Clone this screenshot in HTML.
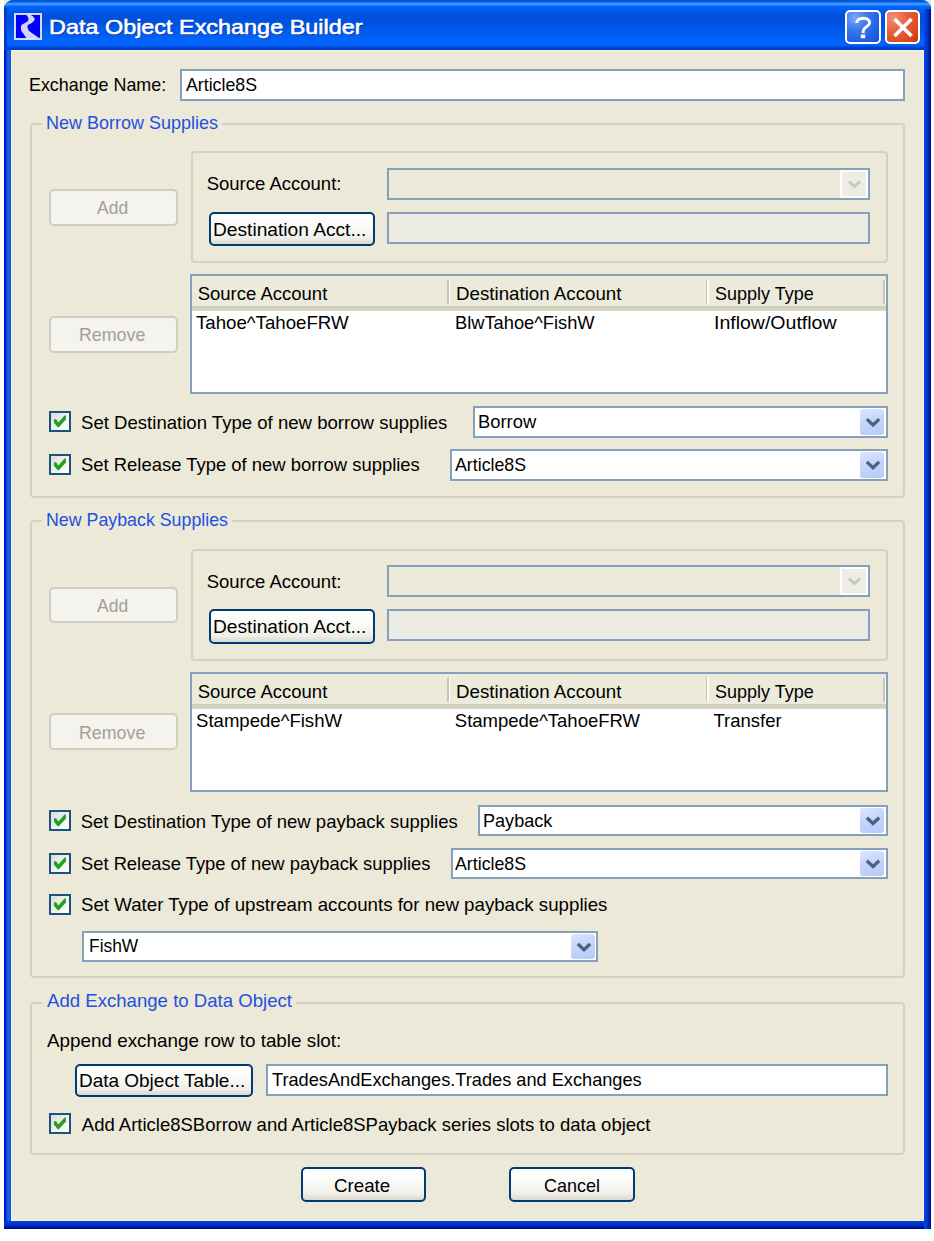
<!DOCTYPE html>
<html><head><meta charset="utf-8"><title>Data Object Exchange Builder</title>
<style>
html,body{margin:0;padding:0;}
body{width:934px;height:1241px;position:relative;overflow:hidden;background:#FFFFFF;font-family:"Liberation Sans", sans-serif;}
</style></head><body>
<div style="position:absolute;left:4px;top:0px;width:927px;height:12px;box-sizing:border-box;background:#ECE9D8;"></div>
<div style="position:absolute;left:4px;top:0;width:927px;height:1229px;border-radius:9px 9px 0 0;overflow:hidden;background:linear-gradient(90deg,#0000C8 0px,#0A2CD8 2px,#1468F0 4px,#0A55D8 6.5px,#0050E0 7px,#0048F0 920px,#0030B0 924px,#000090 927px);"></div>
<div style="position:absolute;left:4px;top:1221px;width:927px;height:8px;box-sizing:border-box;background:linear-gradient(#0040F0,#0030C0 50%,#000080);"></div>
<div style="position:absolute;left:4px;top:1221px;width:8px;height:8px;box-sizing:border-box;background:linear-gradient(#0040F0,#0030C0 50%,#000080);"></div>
<div style="position:absolute;left:4px;top:0;width:927px;height:50px;border-radius:9px 9px 0 0;background:linear-gradient(#0058DD 0px,#0058DD 2px,#3C95FF 3px,#3C95FF 5px,#0066FF 6px,#0053DD 14px,#0050DD 20px,#0058EA 30px,#0062F8 38px,#0064FF 45px,#003DC8 48px,#0040C8 50px);"></div>
<div style="position:absolute;left:924px;top:9px;width:7px;height:1220px;box-sizing:border-box;background:linear-gradient(90deg,#0048F0,#0030B8 60%,#000090);"></div>
<div style="position:absolute;left:4px;top:8px;width:2.5px;height:42px;box-sizing:border-box;background:linear-gradient(90deg,#0030C8,#0048D8);"></div>
<div style="position:absolute;left:11px;top:49.5px;width:913px;height:1171.5px;box-sizing:border-box;background:#ECE9D8;border-left:1px solid #FAF3D9;border-right:1px solid #FAF3D9;border-bottom:1px solid #FAF3D9;"></div>
<div style="position:absolute;left:11px;top:49.5px;width:913px;height:1.5px;box-sizing:border-box;background:#F5F0D8;"></div>
<svg style="position:absolute;left:14px;top:13px" width="28" height="27" viewBox="0 0 28 27"><rect x="0" y="0" width="28" height="27" fill="#D8D8F8"/><rect x="2" y="2" width="24" height="23" fill="#0000FF"/><path d="M12.3 2 L16.8 2 Q20.8 4.2 20.8 6.6 Q19.5 9 17.3 10.2 L13.9 12.1 Q13.2 14 13.5 14.8 L15 17.9 L19.3 21 L23.5 24.1 L25.5 25 L12.3 25 L9.6 21 L7.3 17.9 L6.9 14.8 L7.3 12.1 L10.4 10.2 Q14.6 8 14.6 6.4 Q14.2 3.5 12.3 2 Z" fill="#D4D4F8"/></svg>
<div style="position:absolute;left:845px;top:10px;width:36px;height:34px;box-sizing:border-box;border:2px solid #FFFFFF;border-radius:5px;background:radial-gradient(circle at 25% 20%,#7FA8F8 0%,#3D78EE 35%,#2260E4 70%,#1A50D0 100%);"></div>
<svg style="position:absolute;left:845px;top:10px" width="36" height="34" viewBox="0 0 36 34"><path d="M11.6 13 C11.6 6.8 24.6 6.6 24.6 12.6 C24.6 16.6 18.2 17.2 18.2 21.2 L18.2 23.2" fill="none" stroke="#FFFFFF" stroke-width="2.9"/><rect x="15.8" y="24.6" width="4.4" height="3.6" fill="#FFFFFF"/></svg>
<div style="position:absolute;left:885px;top:10px;width:35px;height:34px;box-sizing:border-box;border:2px solid #FFFFFF;border-radius:5px;background:radial-gradient(circle at 20% 20%,#F0907A 0%,#E5603E 40%,#DD4A1C 75%,#C03A10 100%);"></div>
<svg style="position:absolute;left:885px;top:10px" width="35" height="34" viewBox="0 0 35 34"><path d="M9.5 9 L26.5 26 M26.5 9 L9.5 26" stroke="#FFFFFF" stroke-width="3.6"/></svg>
<div style="position:absolute;left:180px;top:68.5px;width:725px;height:32.0px;box-sizing:border-box;border:2px solid #84A0BC;background:#fff;"></div>
<div style="position:absolute;left:30px;top:122.5px;width:875px;height:375.0px;box-sizing:border-box;border:2px solid #D3D2C2;border-radius:4px;"></div>
<div style="position:absolute;left:42px;top:112px;width:180.2px;height:20px;box-sizing:border-box;background:#ECE9D8;"></div>
<div style="position:absolute;left:191px;top:151px;width:697px;height:112px;box-sizing:border-box;border:2px solid #D3D2C2;border-radius:4px;"></div>
<div style="position:absolute;left:49px;top:189px;width:128.5px;height:36.5px;box-sizing:border-box;border:2px solid #D0CEC2;border-radius:5px;background:#F4F3EE;"></div>
<div style="position:absolute;left:386.5px;top:167.5px;width:483.5px;height:32.0px;box-sizing:border-box;border:2px solid #84A0BC;background:#ECE9D8;"></div>
<div style="position:absolute;left:840px;top:169.5px;width:28px;height:28.0px;box-sizing:border-box;border:2px solid #FFFFFF;background:#EEEDE5;"></div>
<svg style="position:absolute;left:840px;top:169.5px" width="28" height="28.0" viewBox="0 0 28 28.0"><path d="M9.0 11.5 L14.5 16.5 L20.0 11.5" fill="none" stroke="#C9C7BA" stroke-width="3.0"/></svg>
<div style="position:absolute;left:209px;top:211.5px;width:165.5px;height:34.5px;box-sizing:border-box;border:2px solid #003C74;border-radius:5px;background:linear-gradient(#FFFFFF 0%,#FAFAF7 40%,#F0EFEA 80%,#DCD7CC 100%);"></div>
<div style="position:absolute;left:386.5px;top:211.5px;width:483.5px;height:32.0px;box-sizing:border-box;border:2px solid #84A0BC;background:#EBEAE3;"></div>
<div style="position:absolute;left:49px;top:315.5px;width:128.5px;height:37.0px;box-sizing:border-box;border:2px solid #D0CEC2;border-radius:5px;background:#F4F3EE;"></div>
<div style="position:absolute;left:190px;top:273.8px;width:698px;height:120.5px;box-sizing:border-box;border:2px solid #84A0BC;background:#fff;"></div>
<div style="position:absolute;left:192px;top:275.8px;width:694px;height:30.0px;box-sizing:border-box;background:#EBEADB;"></div>
<div style="position:absolute;left:192px;top:305.8px;width:694px;height:5.0px;box-sizing:border-box;background:linear-gradient(#CFCBB9,#DCD8C6);"></div>
<div style="position:absolute;left:447px;top:279.8px;width:1.5px;height:24.0px;box-sizing:border-box;background:#C7C5B2;"></div>
<div style="position:absolute;left:448.5px;top:279.8px;width:1.5px;height:24.0px;box-sizing:border-box;background:#FFFFFF;"></div>
<div style="position:absolute;left:705.5px;top:279.8px;width:1.5px;height:24.0px;box-sizing:border-box;background:#C7C5B2;"></div>
<div style="position:absolute;left:707.0px;top:279.8px;width:1.5px;height:24.0px;box-sizing:border-box;background:#FFFFFF;"></div>
<div style="position:absolute;left:883px;top:279.8px;width:1.5px;height:24.0px;box-sizing:border-box;background:#C7C5B2;"></div>
<div style="position:absolute;left:884.5px;top:279.8px;width:1.5px;height:24.0px;box-sizing:border-box;background:#FFFFFF;"></div>
<div style="position:absolute;left:49px;top:411px;width:22px;height:21px;box-sizing:border-box;border:2px solid #1C5180;background:linear-gradient(135deg,#DCDCD7 0%,#F0F0EC 50%,#FFFFFF 100%);"></div>
<svg style="position:absolute;left:49px;top:411px" width="22" height="21" viewBox="0 0 22 21"><path d="M5 8.2 L7.2 8.2 L9.3 11.6 L15.6 4.4 L16.9 4.4 L16.9 8.6 L9.8 16.2 L8.8 16.2 L5 11.8 Z" fill="#21A121"/></svg>
<div style="position:absolute;left:473px;top:406.3px;width:415px;height:32.0px;box-sizing:border-box;border:2px solid #84A0BC;background:#fff;"></div>
<div style="position:absolute;left:860px;top:409.3px;width:24px;height:26.0px;box-sizing:border-box;border-radius:3px;background:linear-gradient(160deg,#DCE6FD 0%,#C6D5FB 45%,#B4CBF8 100%);"></div>
<svg style="position:absolute;left:860px;top:409.3px" width="24" height="26.0" viewBox="0 0 24 26.0"><path d="M6.8 10.1 L13.0 15.9 L19.2 10.1" fill="none" stroke="#4D6185" stroke-width="3.3"/></svg>
<div style="position:absolute;left:49px;top:453.5px;width:22px;height:21.0px;box-sizing:border-box;border:2px solid #1C5180;background:linear-gradient(135deg,#DCDCD7 0%,#F0F0EC 50%,#FFFFFF 100%);"></div>
<svg style="position:absolute;left:49px;top:453.5px" width="22" height="21" viewBox="0 0 22 21"><path d="M5 8.2 L7.2 8.2 L9.3 11.6 L15.6 4.4 L16.9 4.4 L16.9 8.6 L9.8 16.2 L8.8 16.2 L5 11.8 Z" fill="#21A121"/></svg>
<div style="position:absolute;left:450.3px;top:449.2px;width:437.7px;height:31.6px;box-sizing:border-box;border:2px solid #84A0BC;background:#fff;"></div>
<div style="position:absolute;left:860px;top:452.2px;width:24px;height:25.6px;box-sizing:border-box;border-radius:3px;background:linear-gradient(160deg,#DCE6FD 0%,#C6D5FB 45%,#B4CBF8 100%);"></div>
<svg style="position:absolute;left:860px;top:452.2px" width="24" height="25.600000000000023" viewBox="0 0 24 25.600000000000023"><path d="M6.8 9.900000000000011 L13.0 15.700000000000012 L19.2 9.900000000000011" fill="none" stroke="#4D6185" stroke-width="3.3"/></svg>
<div style="position:absolute;left:30px;top:520.2px;width:875px;height:457.8px;box-sizing:border-box;border:2px solid #D3D2C2;border-radius:4px;"></div>
<div style="position:absolute;left:42px;top:509.7px;width:190.4px;height:20.0px;box-sizing:border-box;background:#ECE9D8;"></div>
<div style="position:absolute;left:191px;top:548.7px;width:697px;height:112.0px;box-sizing:border-box;border:2px solid #D3D2C2;border-radius:4px;"></div>
<div style="position:absolute;left:49px;top:586.7px;width:128.5px;height:36.5px;box-sizing:border-box;border:2px solid #D0CEC2;border-radius:5px;background:#F4F3EE;"></div>
<div style="position:absolute;left:386.5px;top:565.2px;width:483.5px;height:32.0px;box-sizing:border-box;border:2px solid #84A0BC;background:#ECE9D8;"></div>
<div style="position:absolute;left:840px;top:567.2px;width:28px;height:28.0px;box-sizing:border-box;border:2px solid #FFFFFF;background:#EEEDE5;"></div>
<svg style="position:absolute;left:840px;top:567.2px" width="28" height="28.0" viewBox="0 0 28 28.0"><path d="M9.0 11.5 L14.5 16.5 L20.0 11.5" fill="none" stroke="#C9C7BA" stroke-width="3.0"/></svg>
<div style="position:absolute;left:209px;top:609.2px;width:165.5px;height:34.5px;box-sizing:border-box;border:2px solid #003C74;border-radius:5px;background:linear-gradient(#FFFFFF 0%,#FAFAF7 40%,#F0EFEA 80%,#DCD7CC 100%);"></div>
<div style="position:absolute;left:386.5px;top:609.2px;width:483.5px;height:32.0px;box-sizing:border-box;border:2px solid #84A0BC;background:#EBEAE3;"></div>
<div style="position:absolute;left:49px;top:713.2px;width:128.5px;height:37.0px;box-sizing:border-box;border:2px solid #D0CEC2;border-radius:5px;background:#F4F3EE;"></div>
<div style="position:absolute;left:190px;top:671.5px;width:698px;height:120.5px;box-sizing:border-box;border:2px solid #84A0BC;background:#fff;"></div>
<div style="position:absolute;left:192px;top:673.5px;width:694px;height:30.0px;box-sizing:border-box;background:#EBEADB;"></div>
<div style="position:absolute;left:192px;top:703.5px;width:694px;height:5.0px;box-sizing:border-box;background:linear-gradient(#CFCBB9,#DCD8C6);"></div>
<div style="position:absolute;left:447px;top:677.5px;width:1.5px;height:24.0px;box-sizing:border-box;background:#C7C5B2;"></div>
<div style="position:absolute;left:448.5px;top:677.5px;width:1.5px;height:24.0px;box-sizing:border-box;background:#FFFFFF;"></div>
<div style="position:absolute;left:705.5px;top:677.5px;width:1.5px;height:24.0px;box-sizing:border-box;background:#C7C5B2;"></div>
<div style="position:absolute;left:707.0px;top:677.5px;width:1.5px;height:24.0px;box-sizing:border-box;background:#FFFFFF;"></div>
<div style="position:absolute;left:883px;top:677.5px;width:1.5px;height:24.0px;box-sizing:border-box;background:#C7C5B2;"></div>
<div style="position:absolute;left:884.5px;top:677.5px;width:1.5px;height:24.0px;box-sizing:border-box;background:#FFFFFF;"></div>
<div style="position:absolute;left:49px;top:810px;width:22px;height:21px;box-sizing:border-box;border:2px solid #1C5180;background:linear-gradient(135deg,#DCDCD7 0%,#F0F0EC 50%,#FFFFFF 100%);"></div>
<svg style="position:absolute;left:49px;top:810px" width="22" height="21" viewBox="0 0 22 21"><path d="M5 8.2 L7.2 8.2 L9.3 11.6 L15.6 4.4 L16.9 4.4 L16.9 8.6 L9.8 16.2 L8.8 16.2 L5 11.8 Z" fill="#21A121"/></svg>
<div style="position:absolute;left:478px;top:805.2px;width:410px;height:31.3px;box-sizing:border-box;border:2px solid #84A0BC;background:#fff;"></div>
<div style="position:absolute;left:860px;top:808.2px;width:24px;height:25.3px;box-sizing:border-box;border-radius:3px;background:linear-gradient(160deg,#DCE6FD 0%,#C6D5FB 45%,#B4CBF8 100%);"></div>
<svg style="position:absolute;left:860px;top:808.2px" width="24" height="25.299999999999955" viewBox="0 0 24 25.299999999999955"><path d="M6.8 9.749999999999977 L13.0 15.549999999999978 L19.2 9.749999999999977" fill="none" stroke="#4D6185" stroke-width="3.3"/></svg>
<div style="position:absolute;left:49px;top:852.5px;width:22px;height:21.0px;box-sizing:border-box;border:2px solid #1C5180;background:linear-gradient(135deg,#DCDCD7 0%,#F0F0EC 50%,#FFFFFF 100%);"></div>
<svg style="position:absolute;left:49px;top:852.5px" width="22" height="21" viewBox="0 0 22 21"><path d="M5 8.2 L7.2 8.2 L9.3 11.6 L15.6 4.4 L16.9 4.4 L16.9 8.6 L9.8 16.2 L8.8 16.2 L5 11.8 Z" fill="#21A121"/></svg>
<div style="position:absolute;left:450.6px;top:848px;width:437.4px;height:31.3px;box-sizing:border-box;border:2px solid #84A0BC;background:#fff;"></div>
<div style="position:absolute;left:860px;top:851px;width:24px;height:25.3px;box-sizing:border-box;border-radius:3px;background:linear-gradient(160deg,#DCE6FD 0%,#C6D5FB 45%,#B4CBF8 100%);"></div>
<svg style="position:absolute;left:860px;top:851px" width="24" height="25.299999999999955" viewBox="0 0 24 25.299999999999955"><path d="M6.8 9.749999999999977 L13.0 15.549999999999978 L19.2 9.749999999999977" fill="none" stroke="#4D6185" stroke-width="3.3"/></svg>
<div style="position:absolute;left:49px;top:894px;width:22px;height:21px;box-sizing:border-box;border:2px solid #1C5180;background:linear-gradient(135deg,#DCDCD7 0%,#F0F0EC 50%,#FFFFFF 100%);"></div>
<svg style="position:absolute;left:49px;top:894px" width="22" height="21" viewBox="0 0 22 21"><path d="M5 8.2 L7.2 8.2 L9.3 11.6 L15.6 4.4 L16.9 4.4 L16.9 8.6 L9.8 16.2 L8.8 16.2 L5 11.8 Z" fill="#21A121"/></svg>
<div style="position:absolute;left:81.8px;top:930.6px;width:516.7px;height:31.7px;box-sizing:border-box;border:2px solid #84A0BC;background:#fff;"></div>
<div style="position:absolute;left:570.5px;top:933.6px;width:24.0px;height:25.7px;box-sizing:border-box;border-radius:3px;background:linear-gradient(160deg,#DCE6FD 0%,#C6D5FB 45%,#B4CBF8 100%);"></div>
<svg style="position:absolute;left:570.5px;top:933.6px" width="24.0" height="25.699999999999932" viewBox="0 0 24.0 25.699999999999932"><path d="M6.8 9.949999999999966 L13.0 15.749999999999966 L19.2 9.949999999999966" fill="none" stroke="#4D6185" stroke-width="3.3"/></svg>
<div style="position:absolute;left:30px;top:1002px;width:875px;height:153px;box-sizing:border-box;border:2px solid #D3D2C2;border-radius:4px;"></div>
<div style="position:absolute;left:42px;top:990px;width:254.3px;height:20px;box-sizing:border-box;background:#ECE9D8;"></div>
<div style="position:absolute;left:75px;top:1063.7px;width:178.2px;height:33.5px;box-sizing:border-box;border:2px solid #003C74;border-radius:5px;background:linear-gradient(#FFFFFF 0%,#FAFAF7 40%,#F0EFEA 80%,#DCD7CC 100%);"></div>
<div style="position:absolute;left:266px;top:1063.7px;width:622px;height:32.3px;box-sizing:border-box;border:2px solid #84A0BC;background:#fff;"></div>
<div style="position:absolute;left:49px;top:1113px;width:22px;height:21px;box-sizing:border-box;border:2px solid #1C5180;background:linear-gradient(135deg,#DCDCD7 0%,#F0F0EC 50%,#FFFFFF 100%);"></div>
<svg style="position:absolute;left:49px;top:1113px" width="22" height="21" viewBox="0 0 22 21"><path d="M5 8.2 L7.2 8.2 L9.3 11.6 L15.6 4.4 L16.9 4.4 L16.9 8.6 L9.8 16.2 L8.8 16.2 L5 11.8 Z" fill="#21A121"/></svg>
<div style="position:absolute;left:300.5px;top:1167px;width:125.5px;height:35px;box-sizing:border-box;border:2px solid #003C74;border-radius:5px;background:linear-gradient(#FFFFFF 0%,#FAFAF7 40%,#F0EFEA 80%,#DCD7CC 100%);"></div>
<div style="position:absolute;left:509px;top:1167px;width:125.5px;height:35px;box-sizing:border-box;border:2px solid #003C74;border-radius:5px;background:linear-gradient(#FFFFFF 0%,#FAFAF7 40%,#F0EFEA 80%,#DCD7CC 100%);"></div>
<div style="position:absolute;left:49.00px;top:17.39px;font-size:20.8px;line-height:20.8px;font-weight:normal;color:#FFFFFF;white-space:pre;transform:scaleX(1.1252);transform-origin:0 0;-webkit-text-stroke:0.6px #FFFFFF;text-shadow:1px 1px 0 #0A2A9A;">Data Object Exchange Builder</div>
<div style="position:absolute;left:29.20px;top:75.64px;font-size:18.5px;line-height:18.5px;font-weight:normal;color:#000;white-space:pre;transform:scaleX(0.9667);transform-origin:0 0;">Exchange Name:</div>
<div style="position:absolute;left:186.30px;top:75.84px;font-size:18.5px;line-height:18.5px;font-weight:normal;color:#000;white-space:pre;transform:scaleX(0.9591);transform-origin:0 0;">Article8S</div>
<div style="position:absolute;left:46.20px;top:113.94px;font-size:18.5px;line-height:18.5px;font-weight:normal;color:#1F50DF;white-space:pre;transform:scaleX(0.9725);transform-origin:0 0;">New Borrow Supplies</div>
<div style="position:absolute;left:96.65px;top:199.34px;font-size:18.5px;line-height:18.5px;font-weight:normal;color:#A39F94;white-space:pre;transform:scaleX(0.9447);transform-origin:0 0;">Add</div>
<div style="position:absolute;left:206.70px;top:175.04px;font-size:18.5px;line-height:18.5px;font-weight:normal;color:#000;white-space:pre;">Source Account:</div>
<div style="position:absolute;left:213.40px;top:220.64px;font-size:18.5px;line-height:18.5px;font-weight:normal;color:#000;white-space:pre;transform:scaleX(1.0359);transform-origin:0 0;">Destination Acct...</div>
<div style="position:absolute;left:79.05px;top:326.14px;font-size:18.5px;line-height:18.5px;font-weight:normal;color:#A39F94;white-space:pre;transform:scaleX(0.9624);transform-origin:0 0;">Remove</div>
<div style="position:absolute;left:197.70px;top:284.84px;font-size:18.5px;line-height:18.5px;font-weight:normal;color:#000;white-space:pre;">Source Account</div>
<div style="position:absolute;left:455.90px;top:284.84px;font-size:18.5px;line-height:18.5px;font-weight:normal;color:#000;white-space:pre;transform:scaleX(1.0120);transform-origin:0 0;">Destination Account</div>
<div style="position:absolute;left:714.90px;top:284.84px;font-size:18.5px;line-height:18.5px;font-weight:normal;color:#000;white-space:pre;transform:scaleX(0.9745);transform-origin:0 0;">Supply Type</div>
<div style="position:absolute;left:196.00px;top:314.44px;font-size:18.5px;line-height:18.5px;font-weight:normal;color:#000;white-space:pre;transform:scaleX(1.0087);transform-origin:0 0;">Tahoe^TahoeFRW</div>
<div style="position:absolute;left:454.80px;top:314.44px;font-size:18.5px;line-height:18.5px;font-weight:normal;color:#000;white-space:pre;transform:scaleX(0.9879);transform-origin:0 0;">BlwTahoe^FishW</div>
<div style="position:absolute;left:713.50px;top:314.44px;font-size:18.5px;line-height:18.5px;font-weight:normal;color:#000;white-space:pre;transform:scaleX(1.0543);transform-origin:0 0;">Inflow/Outflow</div>
<div style="position:absolute;left:80.70px;top:413.54px;font-size:18.5px;line-height:18.5px;font-weight:normal;color:#000;white-space:pre;transform:scaleX(1.0043);transform-origin:0 0;">Set Destination Type of new borrow supplies</div>
<div style="position:absolute;left:477.50px;top:412.94px;font-size:18.5px;line-height:18.5px;font-weight:normal;color:#000;white-space:pre;transform:scaleX(0.9930);transform-origin:0 0;">Borrow</div>
<div style="position:absolute;left:80.70px;top:456.34px;font-size:18.5px;line-height:18.5px;font-weight:normal;color:#000;white-space:pre;transform:scaleX(0.9963);transform-origin:0 0;">Set Release Type of new borrow supplies</div>
<div style="position:absolute;left:454.80px;top:455.84px;font-size:18.5px;line-height:18.5px;font-weight:normal;color:#000;white-space:pre;transform:scaleX(0.9604);transform-origin:0 0;">Article8S</div>
<div style="position:absolute;left:46.40px;top:510.84px;font-size:18.5px;line-height:18.5px;font-weight:normal;color:#1F50DF;white-space:pre;transform:scaleX(0.9618);transform-origin:0 0;">New Payback Supplies</div>
<div style="position:absolute;left:96.65px;top:597.04px;font-size:18.5px;line-height:18.5px;font-weight:normal;color:#A39F94;white-space:pre;transform:scaleX(0.9447);transform-origin:0 0;">Add</div>
<div style="position:absolute;left:206.70px;top:572.74px;font-size:18.5px;line-height:18.5px;font-weight:normal;color:#000;white-space:pre;">Source Account:</div>
<div style="position:absolute;left:213.40px;top:618.34px;font-size:18.5px;line-height:18.5px;font-weight:normal;color:#000;white-space:pre;transform:scaleX(1.0359);transform-origin:0 0;">Destination Acct...</div>
<div style="position:absolute;left:79.05px;top:723.84px;font-size:18.5px;line-height:18.5px;font-weight:normal;color:#A39F94;white-space:pre;transform:scaleX(0.9624);transform-origin:0 0;">Remove</div>
<div style="position:absolute;left:197.70px;top:682.54px;font-size:18.5px;line-height:18.5px;font-weight:normal;color:#000;white-space:pre;">Source Account</div>
<div style="position:absolute;left:455.90px;top:682.54px;font-size:18.5px;line-height:18.5px;font-weight:normal;color:#000;white-space:pre;transform:scaleX(1.0120);transform-origin:0 0;">Destination Account</div>
<div style="position:absolute;left:714.90px;top:682.54px;font-size:18.5px;line-height:18.5px;font-weight:normal;color:#000;white-space:pre;transform:scaleX(0.9745);transform-origin:0 0;">Supply Type</div>
<div style="position:absolute;left:196.00px;top:712.14px;font-size:18.5px;line-height:18.5px;font-weight:normal;color:#000;white-space:pre;transform:scaleX(1.0039);transform-origin:0 0;">Stampede^FishW</div>
<div style="position:absolute;left:454.80px;top:712.14px;font-size:18.5px;line-height:18.5px;font-weight:normal;color:#000;white-space:pre;">Stampede^TahoeFRW</div>
<div style="position:absolute;left:713.50px;top:712.14px;font-size:18.5px;line-height:18.5px;font-weight:normal;color:#000;white-space:pre;">Transfer</div>
<div style="position:absolute;left:80.70px;top:812.54px;font-size:18.5px;line-height:18.5px;font-weight:normal;color:#000;white-space:pre;">Set Destination Type of new payback supplies</div>
<div style="position:absolute;left:482.50px;top:811.84px;font-size:18.5px;line-height:18.5px;font-weight:normal;color:#000;white-space:pre;transform:scaleX(0.9765);transform-origin:0 0;">Payback</div>
<div style="position:absolute;left:80.70px;top:855.04px;font-size:18.5px;line-height:18.5px;font-weight:normal;color:#000;white-space:pre;transform:scaleX(0.9915);transform-origin:0 0;">Set Release Type of new payback supplies</div>
<div style="position:absolute;left:455.10px;top:854.64px;font-size:18.5px;line-height:18.5px;font-weight:normal;color:#000;white-space:pre;transform:scaleX(0.9604);transform-origin:0 0;">Article8S</div>
<div style="position:absolute;left:80.70px;top:896.34px;font-size:18.5px;line-height:18.5px;font-weight:normal;color:#000;white-space:pre;transform:scaleX(1.0097);transform-origin:0 0;">Set Water Type of upstream accounts for new payback supplies</div>
<div style="position:absolute;left:89.10px;top:937.24px;font-size:18.5px;line-height:18.5px;font-weight:normal;color:#000;white-space:pre;transform:scaleX(0.9404);transform-origin:0 0;">FishW</div>
<div style="position:absolute;left:47.30px;top:991.74px;font-size:18.5px;line-height:18.5px;font-weight:normal;color:#1F50DF;white-space:pre;transform:scaleX(1.0052);transform-origin:0 0;">Add Exchange to Data Object</div>
<div style="position:absolute;left:47.30px;top:1031.64px;font-size:18.5px;line-height:18.5px;font-weight:normal;color:#000;white-space:pre;transform:scaleX(1.0183);transform-origin:0 0;">Append exchange row to table slot:</div>
<div style="position:absolute;left:79.30px;top:1072.34px;font-size:18.5px;line-height:18.5px;font-weight:normal;color:#000;white-space:pre;transform:scaleX(1.0250);transform-origin:0 0;">Data Object Table...</div>
<div style="position:absolute;left:272.30px;top:1070.64px;font-size:18.5px;line-height:18.5px;font-weight:normal;color:#000;white-space:pre;transform:scaleX(0.9831);transform-origin:0 0;">TradesAndExchanges.Trades and Exchanges</div>
<div style="position:absolute;left:81.80px;top:1115.54px;font-size:18.5px;line-height:18.5px;font-weight:normal;color:#000;white-space:pre;">Add Article8SBorrow and Article8SPayback series slots to data object</div>
<div style="position:absolute;left:334.20px;top:1177.14px;font-size:18.5px;line-height:18.5px;font-weight:normal;color:#000;white-space:pre;transform:scaleX(1.0120);transform-origin:0 0;">Create</div>
<div style="position:absolute;left:543.75px;top:1177.14px;font-size:18.5px;line-height:18.5px;font-weight:normal;color:#000;white-space:pre;transform:scaleX(0.9706);transform-origin:0 0;">Cancel</div>
</body></html>
